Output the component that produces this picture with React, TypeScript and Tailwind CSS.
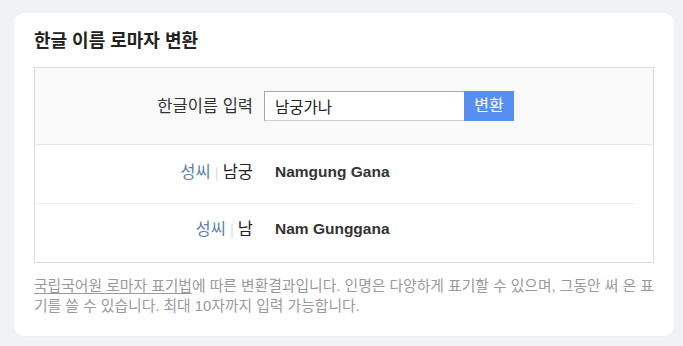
import React from 'react';

const results = [
  { family: '남궁', roman: 'Namgung Gana', pad: 'pt-[15px] h-[59px] mr-[19px] border-b border-[#ececec]' },
  { family: '남', roman: 'Nam Gunggana', pad: 'pt-[13px] h-[58px]' },
];

const App = () => {
  return (
    <div
      className="min-h-screen w-[683px] bg-[#f0f2f5] pt-[13px] pl-[14px]"
      style={{ fontFamily: '"Liberation Sans", "Noto Sans CJK KR", sans-serif' }}
    >
      <div className="w-[660px] rounded-[9px] bg-white px-[20px] pt-[16px] pb-[20px] shadow-[0_0_1px_rgba(0,0,0,0.12)]">
        {/* Title */}
        <h1 className="mb-[14px] text-[18px] font-bold leading-[24px] text-[#222]">한글 이름 로마자 변환</h1>

        {/* Converter box */}
        <div className="border border-[#dcdcdc]">
          <div className="flex items-center border-b border-[#e6e6e6] bg-[#f9f9f9] pt-[23px] pb-[23px]">
            <label className="w-[218px] text-right text-[16.5px] text-[#333]">한글이름 입력</label>
            <div className="ml-[11px] flex">
              <input
                defaultValue="남궁가나"
                className="h-[30px] w-[200px] border border-[#a8a8a8] border-b-[#cfcfcf] border-r-0 bg-white px-[10px] text-[15.5px] text-[#222] outline-none"
                style={{ fontFamily: '"Liberation Sans", "Noto Sans CJK KR", sans-serif' }}
              />
              <button className="h-[30px] w-[50px] bg-[#578ff0] text-[16px] text-white">변환</button>
            </div>
          </div>

          {/* Results */}
          {results.map((r) => (
            <div key={r.family} className={`flex items-start leading-[24px] ${r.pad}`}>
              <div className="w-[218px] text-right text-[16.5px]">
                <span className="text-[#5b7fb0]">성씨</span>
                <span className="mx-[4px] text-[15px] text-[#dddddd]">|</span>
                <span className="text-[#222]">{r.family}</span>
              </div>
              <div className="ml-[22px] text-[15.5px] font-bold text-[#333]">{r.roman}</div>
            </div>
          ))}
        </div>

        {/* Footnote */}
        <p className="mt-[13px] text-[14.8px] leading-[20px] text-[#999]">
          <span className="underline underline-offset-2">국립국어원 로마자 표기법</span>에 따른 변환결과입니다. 인명은 다양하게 표기할 수 있으며, 그동안 써 온 표기를 쓸 수 있습니다. 최대 10자까지 입력 가능합니다.
        </p>
      </div>
    </div>
  );
};

export default App;
